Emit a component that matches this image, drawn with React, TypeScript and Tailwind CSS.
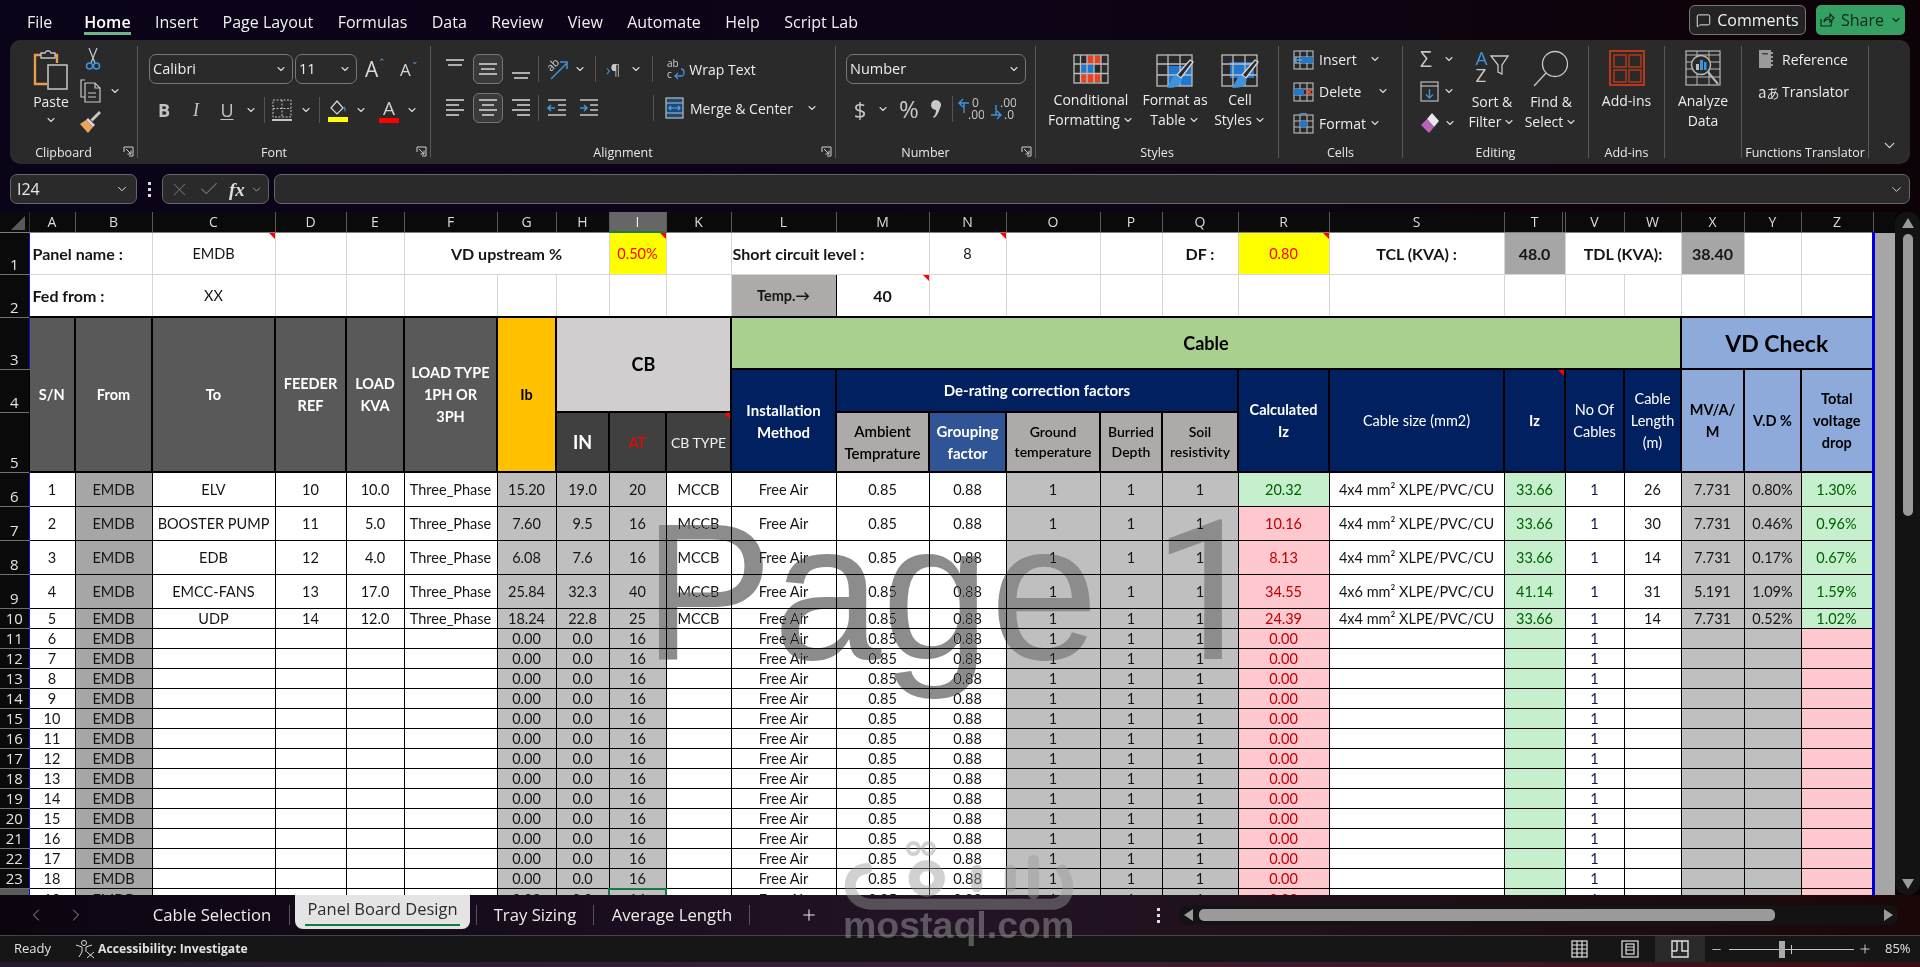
import React from 'react';
import { ChevronDown, ChevronLeft, ChevronRight, MessageSquare, Plus, Minus, X, Check } from 'lucide-react';

const Chev = ({ className = '' }: { className?: string }) => (
  <ChevronDown size={12} strokeWidth={2.2} className={`text-[#d8d8d8] shrink-0 ${className}`} />
);

const Launcher = () => (
  <svg width="11" height="11" viewBox="0 0 11 11" className="absolute right-[3px] bottom-[1px]" fill="none" stroke="#cfcfcf" strokeWidth="1">
    <path d="M1 6V1h9v9H6" />
    <path d="M1 1l0 0M3 3l5 5M8 4.5V8H4.5" />
  </svg>
);

const Lines = ({ ys }: { ys: [number, number, number][] }) => (
  <svg width="20" height="22" viewBox="0 0 20 22" fill="none" stroke="#d0d0d0" strokeWidth="1.6">
    {ys.map(([y, a, b], i) => <path key={i} d={`M${a} ${y}H${b}`} />)}
  </svg>
);

const Group = ({ w, label, launcher, children }: { w: string; label?: string; launcher?: boolean; children: React.ReactNode }) => (
  <div className={`relative flex flex-col h-full border-r border-[#585858] shrink-0 ${w}`}>
    <div className="flex-1 min-h-0">{children}</div>
    {label && <div className={`h-[12px] leading-[14px] text-center text-[12.5px] text-[#e8e8e8] whitespace-nowrap ${launcher ? 'pr-[20px]' : ''}`}>{label}</div>}
    {launcher && <Launcher />}
  </div>
);

const Select = ({ w, text, textClass = '' }: { w: string; text: string; textClass?: string }) => (
  <div className={`flex items-center justify-between h-[30px] px-[3px] pr-[5px] rounded-[7px] border border-[#777] text-[14.5px] ${w} ${textClass}`}>
    <span>{text}</span>
    <Chev />
  </div>
);

const CFIcon = () => (
  <svg width="36" height="30" viewBox="0 0 36 30" fill="none" stroke="#bdbdbd" strokeWidth="1.3">
    <rect x="14" y="2" width="14" height="8" fill="#e8431f" stroke="none" />
    <rect x="7" y="11" width="14" height="8" fill="#1e78cf" stroke="none" />
    <rect x="7" y="20" width="21" height="8" fill="#e8431f" stroke="none" />
    <rect x="1" y="1" width="34" height="28" />
    <path d="M1 10h34M1 19.500h34M7.500 1v28M14 1v28M21 1v28M28 1v28" />
  </svg>
);

const TableBrush = ({ variant }: { variant: 'table' | 'cell' }) => (
  <svg width="38" height="36" viewBox="0 0 38 36" fill="none" stroke="#bdbdbd" strokeWidth="1.3">
    {variant === 'table' ? <rect x="12" y="12" width="24" height="20" fill="#1e78cf" stroke="none" /> : <rect x="9" y="8" width="24" height="16" fill="#1e78cf" stroke="none" />}
    <rect x="1" y="1" width="35" height="31" />
    <path d="M1 10h35M1 21h35M12 1v31M24 1v31" />
    <path d="M37 8L25 24l-4-3L34 6z" fill="#2b2b2b" stroke="#d8d8d8" />
    <path d="M20 22c-4 1-4 6-8 11 7 1 13-2 13-8z" fill="#3f93dd" stroke="#3f93dd" />
  </svg>
);

const MiniGrid = ({ kind }: { kind: 'insert' | 'delete' | 'format' }) => (
  <svg width="21" height="21" viewBox="0 0 21 21" fill="none" stroke="#bdbdbd" strokeWidth="1.1">
    <rect x="1" y="2" width="19" height="18" />
    <path d="M1 8h19M1 14h19M7 2v18M14 2v18" />
    {kind === 'insert' && <><rect x="7" y="8" width="13" height="6" fill="#1e78cf" stroke="none" /><path d="M9 11H1M4 8l-3 3 3 3" stroke="#58a6ea" strokeWidth="1.5" /></>}
    {kind === 'delete' && <><rect x="1" y="8" width="10" height="6" fill="#1e78cf" stroke="none" /><path d="M13 8l6 6M19 8l-6 6" stroke="#e8563a" strokeWidth="1.6" /></>}
    {kind === 'format' && <><rect x="7" y="8" width="7" height="6" fill="#1e78cf" stroke="none" /><path d="M7 0h7" stroke="#58a6ea" strokeWidth="1.6" /></>}
  </svg>
);

const TopTabs = () => (
  <div className="flex items-center h-[40px] shrink-0 pl-[27px] pr-[15px] text-[16px] text-[#f0f0f0]">
    <span className="mr-[32px] mt-[4px]">File</span>
    <div className="flex gap-[24.4px] mt-[4px]">
      <span className="relative font-semibold text-white">
        Home
        <span className="absolute left-0 right-0 top-[22px] h-[3px] bg-[#6fb58a]" />
      </span>
      <span>Insert</span>
      <span>Page Layout</span>
      <span>Formulas</span>
      <span>Data</span>
      <span>Review</span>
      <span>View</span>
      <span>Automate</span>
      <span>Help</span>
      <span>Script Lab</span>
    </div>
    <div className="ml-auto flex items-center gap-[10px]">
      <div className="flex items-center gap-[6px] w-[117px] h-[30px] justify-center rounded-[6px] border border-[#777] bg-[#232323]">
        <MessageSquare size={15} strokeWidth={1.5} />
        <span>Comments</span>
      </div>
      <div className="flex items-center gap-[6px] w-[89px] h-[30px] justify-center rounded-[5px] bg-[#34a162] text-[#12291b]">
        <svg width="16" height="16" viewBox="0 0 16 16" fill="none" stroke="#12291b" strokeWidth="1.2">
          <path d="M2 7v7h10l1-5M5 10c0-4 2-5 6-5V2l4 4-4 4V7c-3 0-5 1-6 3z" />
        </svg>
        <span>Share</span>
        <Chev className="!text-[#12291b]" />
      </div>
    </div>
  </div>
);

const DecIcon = ({ inc }: { inc: boolean }) => (
  <svg width="26" height="26" viewBox="0 0 26 26" fill="none">
    <text x={inc ? 14 : 10} y="11" fontSize="12" fill="#c8c8c8">{inc ? '0' : '.00'}</text>
    <text x={inc ? 10 : 14} y="23" fontSize="12" fill="#c8c8c8">{inc ? '.00' : '.0'}</text>
    {inc
      ? <path d="M11 7H1M5 3L1 7l4 4M6 7v10" stroke="#3f93dd" strokeWidth="1.4" />
      : <path d="M1 19h10M7 15l4 4-4 4M6 9v10" stroke="#3f93dd" strokeWidth="1.4" />}
  </svg>
);

const Ribbon = () => (
  <div className="flex mx-[10px] h-[124px] shrink-0 py-[6px] rounded-[10px] bg-[#2a2a2a] text-[14px] text-[#ececec]">
    <Group w="w-[128px]" label="Clipboard" launcher>
      <div className="flex pt-[4px]">
        <div className="flex flex-col items-center ml-[17px] w-[48px]">
          <svg width="36" height="40" viewBox="0 0 36 40" fill="none">
            <path d="M12 5H2v29h12" stroke="#e89c4c" strokeWidth="2.4" />
            <path d="M21 5h3v8" stroke="#e89c4c" strokeWidth="2.4" />
            <path d="M8 8V3h4c1-3 5-3 6 0h4v5z" fill="#2a2a2a" stroke="#c4c4c4" strokeWidth="1.3" />
            <rect x="15" y="15" width="19" height="24" fill="#2a2a2a" stroke="#c8c8c8" strokeWidth="1.5" />
          </svg>
          <span className="leading-[20px] mt-[2px]">Paste</span>
          <Chev className="mt-[2px]" />
        </div>
        <div className="flex flex-col ml-[3px] -mt-[6px]">
          <div className="h-[30px] flex items-center pl-[7px]">
            <svg width="16" height="24" viewBox="0 0 16 24" fill="none" stroke="#c8c8c8" strokeWidth="1.2">
              <path d="M4 1l6 15M12 1L6 16" />
              <circle cx="4.500" cy="19" r="3" stroke="#3f93dd" strokeWidth="1.5" />
              <circle cx="11.500" cy="19" r="3" stroke="#3f93dd" strokeWidth="1.5" />
            </svg>
          </div>
          <div className="h-[33px] flex items-center">
            <svg width="22" height="24" viewBox="0 0 22 24" fill="none" stroke="#c8c8c8" strokeWidth="1.2" className="ml-[1px]">
              <path d="M6 1H2v17h4" />
              <path d="M6 4h10l5 5v14H6zM16 4v5h5M9 14h8M9 18h8" />
            </svg>
            <Chev className="ml-[8px]" />
          </div>
          <div className="h-[30px] flex items-center pl-[1px]">
            <svg width="22" height="24" viewBox="0 0 22 24" fill="none">
              <path d="M12 10l8-8 1 1-8 8" stroke="#c8c8c8" strokeWidth="1.5" />
              <path d="M9 8l7 7-2 2-7-7z" fill="#d8d8d8" />
              <path d="M7 10l7 7-5 6-8-9z" fill="#e8a65c" />
            </svg>
          </div>
        </div>
      </div>
    </Group>

    <Group w="w-[293px]" label="Font" launcher>
      <div className="flex items-center pt-[8px] ml-[11px]">
        <Select w="w-[144px]" text="Calibri" />
        <Select w="w-[62px] ml-[2px]" text="11" />
        <div className="flex items-start ml-[8px] w-[30px]">
          <span className="text-[21px] leading-[26px] text-[#d8d8d8]">A</span>
          <span className="text-[9px] leading-[12px] text-[#58a6ea]">⌃</span>
        </div>
        <div className="flex items-start ml-[5px]">
          <span className="text-[17px] leading-[26px] text-[#d8d8d8] mt-[2px]">A</span>
          <span className="text-[9px] leading-[12px] text-[#58a6ea]">⌄</span>
        </div>
      </div>
      <div className="flex items-center mt-[12px] ml-[10px] h-[28px] text-[#c4c4c4] text-[18px]">
        <span className="w-[32px] text-center font-bold">B</span>
        <span className="w-[32px] text-center italic font-['Liberation_Serif',serif]">I</span>
        <span className="w-[30px] text-center underline underline-offset-2">U</span>
        <Chev className="ml-[3px]" />
        <span className="w-px h-[26px] bg-[#555] ml-[7px]" />
        <svg width="20" height="22" viewBox="0 0 20 22" fill="none" stroke="#c4c4c4" strokeWidth="1" strokeDasharray="2 1.500" className="ml-[7px]">
          <rect x="1" y="1" width="18" height="17" />
          <path d="M10 1v17M1 9.500h18" />
          <path d="M0 21h20" strokeDasharray="0" strokeWidth="2" />
        </svg>
        <Chev className="ml-[8px]" />
        <span className="w-px h-[26px] bg-[#555] ml-[7px]" />
        <svg width="20" height="24" viewBox="0 0 20 24" className="ml-[8px]" fill="none">
          <path d="M3 10l6-7 6 7-6 6z" stroke="#d8d8d8" strokeWidth="1.2" />
          <path d="M16 8c2 2 2 5 1 6-1-2-1-4-1-6z" fill="#3f93dd" />
          <rect x="0" y="19" width="20" height="5" fill="#ffff00" />
        </svg>
        <Chev className="ml-[7px]" />
        <div className="flex flex-col items-center w-[20px] ml-[12px]">
          <span className="text-[19px] leading-[20px] text-[#d0d0d0]">A</span>
          <span className="w-[20px] h-[5px] bg-[#ff0000]" />
        </div>
        <Chev className="ml-[7px]" />
      </div>
    </Group>

    <Group w="w-[405px]" label="Alignment" launcher>
      <div className="flex items-center pt-[8px] ml-[14px] h-[38px]">
        <div className="w-[20px] -mt-[8px]"><Lines ys={[[6, 1, 19], [11, 3, 17]]} /></div>
        <div className="flex items-center justify-center ml-[8px] w-[30px] h-[30px] rounded-[6px] border border-[#777] bg-[#3a3a3a]"><Lines ys={[[6, 1, 19], [11, 3, 17], [16, 1, 19]]} /></div>
        <div className="w-[20px] ml-[8px] mt-[8px]"><Lines ys={[[11, 1, 19], [16, 3, 17]]} /></div>
        <span className="w-px h-[26px] bg-[#555] ml-[7px]" />
        <svg width="22" height="24" viewBox="0 0 22 24" className="ml-[8px]" fill="none">
          <text x="1" y="12" fontSize="11" fill="#d0d0d0" transform="rotate(-45 6 10)">ab</text>
          <path d="M4 22L20 6M13 5h7v7" stroke="#3f93dd" strokeWidth="1.5" />
        </svg>
        <Chev className="ml-[5px]" />
        <span className="w-px h-[26px] bg-[#555] ml-[9px]" />
        <span className="ml-[10px] text-[15px]"><span className="text-[#3f93dd]">›</span><span className="text-[#c8c8c8]">¶</span></span>
        <Chev className="ml-[10px]" />
        <span className="w-px h-[26px] bg-[#555] ml-[10px]" />
        <div className="flex items-center ml-[14px]">
          <svg width="20" height="24" viewBox="0 0 20 24" fill="none">
            <text x="0" y="10" fontSize="10" fill="#d0d0d0">ab</text>
            <text x="0" y="21" fontSize="10" fill="#d0d0d0">c</text>
            <path d="M14 12c4 0 4 7 0 7H8M11 16l-3 3 3 3" stroke="#3f93dd" strokeWidth="1.3" />
          </svg>
          <span className="ml-[2px]">Wrap Text</span>
        </div>
      </div>
      <div className="flex items-center mt-[9px] ml-[14px] h-[30px]">
        <Lines ys={[[3, 1, 19], [8, 1, 14], [13, 1, 19], [18, 1, 14]]} />
        <div className="flex items-center justify-center ml-[8px] w-[30px] h-[30px] rounded-[6px] border border-[#777] bg-[#3a3a3a]"><Lines ys={[[3, 1, 19], [8, 4, 16], [13, 1, 19], [18, 4, 16]]} /></div>
        <div className="ml-[8px]"><Lines ys={[[3, 1, 19], [8, 6, 19], [13, 1, 19], [18, 6, 19]]} /></div>
        <span className="w-px h-[26px] bg-[#555] ml-[7px]" />
        <svg width="20" height="22" viewBox="0 0 20 22" fill="none" stroke="#c8c8c8" strokeWidth="1.6" className="ml-[8px]">
          <path d="M1 3h18M11 8h8M11 13h8M1 18h18" />
          <path d="M8 11H1M4 8l-3 3 3 3" stroke="#3f93dd" />
        </svg>
        <svg width="20" height="22" viewBox="0 0 20 22" fill="none" stroke="#c8c8c8" strokeWidth="1.6" className="ml-[12px]">
          <path d="M1 3h18M11 8h8M11 13h8M1 18h18" />
          <path d="M1 11h7M5 8l3 3-3 3" stroke="#3f93dd" />
        </svg>
        <span className="w-px h-[26px] bg-[#555] ml-[54px]" />
        <div className="flex items-center ml-[11px]">
          <svg width="19" height="22" viewBox="0 0 19 22" fill="none" stroke="#bdbdbd" strokeWidth="1.2">
            <rect x="1" y="1" width="17" height="20" fill="#1c4a78" />
            <path d="M1 6h17M1 16h17" />
            <path d="M4 11h11M6 9l-2 2 2 2M13 9l2 2-2 2" stroke="#58a6ea" />
          </svg>
          <span className="ml-[6px]">Merge &amp; Center</span>
          <Chev className="ml-[13px]" />
        </div>
      </div>
    </Group>

    <Group w="w-[200px]" label="Number" launcher>
      <div className="pt-[8px] ml-[10px]"><Select w="w-[180px]" text="Number" /></div>
      <div className="flex items-center mt-[10px] ml-[17px] h-[30px] text-[#c8c8c8]">
        <span className="text-[22px] w-[14px] text-center">$</span>
        <Chev className="ml-[10px]" />
        <span className="text-[24px] ml-[8px] w-[24px] text-center">%</span>
        <svg width="10" height="18" viewBox="0 0 10 18" className="ml-[10px]" fill="#c8c8c8">
          <path d="M5 0a5 5 0 0 1 4 8c-1 4-3 8-6 10l-1-1c2-2 3-4 3-7A5 5 0 0 1 5 0z" />
        </svg>
        <span className="w-px h-[26px] bg-[#555] ml-[11px]" />
        <div className="ml-[5px]"><DecIcon inc /></div>
        <div className="ml-[6px]"><DecIcon inc={false} /></div>
      </div>
    </Group>

    <Group w="w-[243px]" label="Styles">
      <div className="flex pt-[8px] ml-[4px] leading-[20px] text-center">
        <div className="w-[102px] flex flex-col items-center">
          <CFIcon />
          <span className="mt-[6px]">Conditional</span>
          <span className="flex items-center gap-[2px]">Formatting<Chev /></span>
        </div>
        <div className="w-[66px] flex flex-col items-center">
          <div className="-mb-[6px]"><TableBrush variant="table" /></div>
          <span className="mt-[6px]">Format as</span>
          <span className="flex items-center gap-[2px]">Table<Chev /></span>
        </div>
        <div className="w-[64px] flex flex-col items-center">
          <div className="-mb-[6px]"><TableBrush variant="cell" /></div>
          <span className="mt-[6px]">Cell</span>
          <span className="flex items-center gap-[2px]">Styles<Chev /></span>
        </div>
      </div>
    </Group>

    <Group w="w-[124px]" label="Cells">
      <div className="flex flex-col pl-[14px] -mt-[3px]">
        <div className="flex items-center h-[32px]"><MiniGrid kind="insert" /><span className="ml-[5px] w-[50px]">Insert</span><Chev /></div>
        <div className="flex items-center h-[32px]"><MiniGrid kind="delete" /><span className="ml-[5px] w-[58px]">Delete</span><Chev /></div>
        <div className="flex items-center h-[32px]"><MiniGrid kind="format" /><span className="ml-[5px] w-[50px]">Format</span><Chev /></div>
      </div>
    </Group>

    <Group w="w-[186px]" label="Editing">
      <div className="flex">
        <div className="flex flex-col pl-[17px] -mt-[3px] w-[60px]">
          <div className="flex items-center h-[32px] gap-[5px]">
            <span className="text-[21px] w-[18px] leading-none text-[#c8c8c8]">Σ</span><Chev />
          </div>
          <div className="flex items-center h-[32px] gap-[4px]">
            <svg width="19" height="21" viewBox="0 0 19 21" fill="none" stroke="#c8c8c8" strokeWidth="1.1">
              <rect x="1" y="1" width="17" height="19" />
              <path d="M1 5h17" />
              <path d="M9.500 8v9M6 13.500l3.500 3.500 3.500-3.500" stroke="#3f93dd" strokeWidth="1.4" />
            </svg>
            <Chev />
          </div>
          <div className="flex items-center h-[32px] gap-[4px]">
            <svg width="20" height="22" viewBox="0 0 20 22">
              <path d="M12 1l7 8-5 6-7-8z" fill="#e8e8e8" />
              <path d="M7 7l7 8-5 6-8-8z" fill="#b863b8" />
            </svg>
            <Chev />
          </div>
        </div>
        <div className="flex flex-col items-center w-[64px] ml-[-3px] pt-[4px] leading-[20px]">
          <div className="flex items-start h-[36px]">
            <div className="flex flex-col text-[19px] leading-[17px]"><span className="text-[#3f93dd]">A</span><span className="text-[#c8c8c8]">Z</span></div>
            <svg width="19" height="22" viewBox="0 0 19 22" className="mt-[5px] ml-[2px]" fill="none" stroke="#c8c8c8" strokeWidth="1.3">
              <path d="M1 1h17l-6 9v9l-4-2v-7z" />
            </svg>
          </div>
          <span className="mt-[6px]">Sort &amp;</span>
          <span className="flex items-center gap-[2px]">Filter<Chev /></span>
        </div>
        <div className="flex flex-col items-center w-[60px] -ml-[3px] pt-[4px] leading-[20px]">
          <svg width="38" height="38" viewBox="0 0 38 38" fill="none" stroke="#c8c8c8" strokeWidth="1.3" className="-mb-[2px]">
            <circle cx="23" cy="14" r="12.500" />
            <path d="M14 23L2 36" />
          </svg>
          <span className="mt-[6px]">Find &amp;</span>
          <span className="flex items-center gap-[2px]">Select<Chev /></span>
        </div>
      </div>
    </Group>

    <Group w="w-[76px]" label="Add-ins">
      <div className="flex flex-col items-center pt-[4px] leading-[20px]">
        <svg width="36" height="36" viewBox="0 0 36 36" fill="none" stroke="#b5391a" strokeWidth="2">
          <rect x="1" y="1" width="34" height="34" />
          <rect x="5" y="5" width="12" height="12" strokeWidth="1.5" />
          <rect x="20" y="5" width="12" height="12" strokeWidth="1.5" />
          <rect x="5" y="20" width="12" height="12" strokeWidth="1.5" />
          <rect x="20" y="20" width="12" height="12" strokeWidth="1.5" />
        </svg>
        <span className="mt-[5px]">Add-ins</span>
      </div>
    </Group>

    <Group w="w-[77px]">
      <div className="flex flex-col items-center pt-[4px] leading-[20px]">
        <svg width="36" height="36" viewBox="0 0 36 36" fill="none" stroke="#b8b8b8" strokeWidth="1.2">
          <rect x="1" y="1" width="34" height="34" />
          <path d="M1 5h34M1 12h34M1 19h34M1 27h34M12 1v34M24 1v34" strokeWidth="1" />
          <circle cx="16" cy="15" r="9.500" fill="#2a2a2a" strokeWidth="1.5" />
          <rect x="11" y="14" width="3" height="6" fill="#bbb" stroke="none" />
          <rect x="15" y="10" width="3" height="10" fill="#3f93dd" stroke="none" />
          <rect x="19" y="12" width="2.500" height="8" fill="#3f93dd" stroke="none" />
          <path d="M23 22l10 12" strokeWidth="2" />
        </svg>
        <span className="mt-[5px]">Analyze</span>
        <span>Data</span>
      </div>
    </Group>

    <Group w="w-[127px]" label="Functions Translator">
      <div className="flex flex-col pl-[17px] -mt-[3px]">
        <div className="flex items-center h-[32px]">
          <svg width="15" height="20" viewBox="0 0 15 20" fill="#9a9a9a"><rect x="0" y="1" width="12" height="18" /><path d="M12 3h2v2h-2zM12 7h2v2h-2zM12 11h2v2h-2zM12 15h2v2h-2z" /><rect x="3" y="4" width="6" height="1.500" fill="#444" /></svg>
          <span className="ml-[8px]">Reference</span>
        </div>
        <div className="flex items-center h-[32px]">
          <span className="text-[15px] leading-none font-['Noto_Sans_CJK_JP',sans-serif] text-[#ddd] -ml-[1px] w-[24px]">a<span className="text-[13px]">あ</span></span>
          <span>Translator</span>
        </div>
      </div>
    </Group>

    <div className="flex-1 flex items-end justify-center pb-[4px]">
      <ChevronDown size={17} strokeWidth={1.6} className="text-[#e0e0e0]" />
    </div>
  </div>
);

const FormulaBar = () => (
  <div className="flex items-center mx-[10px] mt-[10px] h-[30px] shrink-0 text-[#e8e8e8]">
    <div className="flex items-center justify-between w-[127px] h-full rounded-[7px] border border-[#666] bg-[#2a2a2a] pl-[6px] pr-[7px] text-[16px]">
      <span>I24</span>
      <ChevronDown size={14} strokeWidth={1.6} />
    </div>
    <div className="flex flex-col gap-[3px] w-[25px] items-center">
      <span className="w-[3px] h-[3px] bg-[#ddd]" />
      <span className="w-[3px] h-[3px] bg-[#ddd]" />
      <span className="w-[3px] h-[3px] bg-[#ddd]" />
    </div>
    <div className="flex items-center w-[107px] h-full rounded-[7px] border border-[#666] bg-[#2a2a2a] pl-[6px]">
      <X size={21} strokeWidth={1.2} className="text-[#707070]" />
      <Check size={22} strokeWidth={1.2} className="text-[#707070] ml-[8px]" />
      <span className="ml-[9px] font-['Liberation_Serif',serif] italic font-bold text-[19px] leading-none text-[#dcdcdc]">fx</span>
      <ChevronDown size={13} strokeWidth={1.6} className="ml-[5px] text-[#aaa]" />
    </div>
    <div className="flex items-center justify-end flex-1 ml-[5px] h-full rounded-[7px] border border-[#666] bg-[#2a2a2a] pr-[5px]">
      <ChevronDown size={15} strokeWidth={1.6} className="text-[#ccc]" />
    </div>
  </div>
);

const Tri = () => <span className="absolute top-0 right-0 w-0 h-0 border-l-[6px] border-l-transparent border-t-[6px] border-t-[#ff0000]" />;

const letters = ['A', 'B', 'C', 'D', 'E', 'F', 'G', 'H', 'I', 'K', 'L', 'M', 'N', 'O', 'P', 'Q', 'R', 'S', 'T', 'V', 'W', 'X', 'Y', 'Z'];

const base = 'p-0 text-center align-middle whitespace-nowrap overflow-hidden';
const thin = 'border border-[#d6d6d6] bg-white';
const hd = 'border-2 border-black';
const dat = 'border border-black';
const RN = ({ n, sel }: { n: number; sel?: boolean }) => (
  <td className={`p-0 text-center align-bottom leading-[19px] text-[15px] text-[#e4e4e4] border-b border-b-[#707070] border-r border-r-[#1010e0] font-['Open_Sans',sans-serif] ${sel ? 'bg-[#5a5a5a]' : 'bg-[#0a0a0a]'}`}>{n}</td>
);
const Side = () => <td className="p-0 bg-[#a6a6a6] border-l-[3px] border-l-[#0000e0]" />;

type R = { n: number; to: string; ref: string; kva: string; type: string; ib: string; inn: string; at: string; cb: string; rz: string; ok: boolean; size: string; iz: string; len: string; mv: string; vd: string; tot: string };
const main: R[] = [
  { n: 1, to: 'ELV', ref: '10', kva: '10.0', type: 'Three_Phase', ib: '15.20', inn: '19.0', at: '20', cb: 'MCCB', rz: '20.32', ok: true, size: '4x4 mm² XLPE/PVC/CU', iz: '33.66', len: '26', mv: '7.731', vd: '0.80%', tot: '1.30%' },
  { n: 2, to: 'BOOSTER PUMP', ref: '11', kva: '5.0', type: 'Three_Phase', ib: '7.60', inn: '9.5', at: '16', cb: 'MCCB', rz: '10.16', ok: false, size: '4x4 mm² XLPE/PVC/CU', iz: '33.66', len: '30', mv: '7.731', vd: '0.46%', tot: '0.96%' },
  { n: 3, to: 'EDB', ref: '12', kva: '4.0', type: 'Three_Phase', ib: '6.08', inn: '7.6', at: '16', cb: 'MCCB', rz: '8.13', ok: false, size: '4x4 mm² XLPE/PVC/CU', iz: '33.66', len: '14', mv: '7.731', vd: '0.17%', tot: '0.67%' },
  { n: 4, to: 'EMCC-FANS', ref: '13', kva: '17.0', type: 'Three_Phase', ib: '25.84', inn: '32.3', at: '40', cb: 'MCCB', rz: '34.55', ok: false, size: '4x6 mm² XLPE/PVC/CU', iz: '41.14', len: '31', mv: '5.191', vd: '1.09%', tot: '1.59%' },
  { n: 5, to: 'UDP', ref: '14', kva: '12.0', type: 'Three_Phase', ib: '18.24', inn: '22.8', at: '25', cb: 'MCCB', rz: '24.39', ok: false, size: '4x4 mm² XLPE/PVC/CU', iz: '33.66', len: '14', mv: '7.731', vd: '0.52%', tot: '1.02%' },
];
const filler: R[] = Array.from({ length: 14 }, (_, i) => ({ n: i + 6, to: '', ref: '', kva: '', type: '', ib: '0.00', inn: '0.0', at: '16', cb: '', rz: '0.00', ok: false, size: '', iz: '', len: '', mv: '', vd: '', tot: '' }));

const gray = 'bg-[#bfbfbf]';
const greenC = 'bg-[#c6efce] text-[#006100]';
const pinkC = 'bg-[#ffc7ce] text-[#c00000]';

const DataRow = ({ r, rowNum, h }: { r: R; rowNum: number; h: string }) => (
  <tr className={h}>
    <RN n={rowNum} sel={rowNum === 24} />
    <td className={`${base} ${dat} bg-white`}>{r.n}</td>
    <td className={`${base} ${dat} bg-[#a6a6a6]`}>EMDB</td>
    <td className={`${base} ${dat} bg-white`}>{r.to}</td>
    <td className={`${base} ${dat} bg-white`}>{r.ref}</td>
    <td className={`${base} ${dat} bg-white`}>{r.kva}</td>
    <td className={`${base} ${dat} bg-white`}>{r.type}</td>
    <td className={`${base} ${dat} ${gray}`}>{r.ib}</td>
    <td className={`${base} ${dat} ${gray}`}>{r.inn}</td>
    <td className={`${base} ${rowNum === 24 ? 'border-2 border-[#107c41]' : dat} ${gray}`}>{r.at}</td>
    <td className={`${base} ${dat} bg-white`}>{r.cb}</td>
    <td className={`${base} ${dat} bg-white`}>Free Air</td>
    <td className={`${base} ${dat} bg-white`}>0.85</td>
    <td className={`${base} ${dat} bg-white`}>0.88</td>
    <td className={`${base} ${dat} ${gray}`}>1</td>
    <td className={`${base} ${dat} ${gray}`}>1</td>
    <td className={`${base} ${dat} ${gray}`}>1</td>
    <td className={`${base} ${dat} ${r.ok ? greenC : pinkC}`}>{r.rz}</td>
    <td className={`${base} ${dat} bg-white`}>{r.size}</td>
    <td className={`${base} ${dat} ${greenC}`}>{r.iz}</td>
    <td className={`${base} ${dat} bg-white text-[#0a1a4a]`}>1</td>
    <td className={`${base} ${dat} bg-white`}>{r.len}</td>
    <td className={`${base} ${dat} ${gray}`}>{r.mv}</td>
    <td className={`${base} ${dat} ${gray}`}>{r.vd}</td>
    <td className={`${base} ${dat} ${r.tot ? greenC : 'bg-[#ffc7ce]'}`}>{r.tot}</td>
    <Side />
  </tr>
);

const Sheet = () => (
  <div className="relative flex h-[683px] mt-[8px] shrink-0">
    <div className="relative w-[1895px] h-full overflow-hidden bg-[#a6a6a6]">
      <table className="table-fixed w-[1895px] border-collapse font-['Lato',sans-serif] text-[14.5px] leading-[19px] text-[#151515]">
        <colgroup>
          <col className="w-[29px]" /><col className="w-[46px]" /><col className="w-[77px]" /><col className="w-[123px]" /><col className="w-[71px]" /><col className="w-[58px]" /><col className="w-[93px]" /><col className="w-[59px]" /><col className="w-[53px]" /><col className="w-[57px]" /><col className="w-[65px]" /><col className="w-[105px]" /><col className="w-[93px]" /><col className="w-[77px]" /><col className="w-[94px]" /><col className="w-[62px]" /><col className="w-[76px]" /><col className="w-[91px]" /><col className="w-[175px]" /><col className="w-[61px]" /><col className="w-[59px]" /><col className="w-[57px]" /><col className="w-[63px]" /><col className="w-[57px]" /><col className="w-[72px]" /><col className="w-[22px]" />
        </colgroup>
        <tbody>
          <tr className="h-[20px]">
            <td className="p-0 bg-[#0a0a0a] border-b border-b-[#808080] border-r border-r-[#333]">
              <svg width="14" height="14" viewBox="0 0 14 14" className="ml-[11px] mt-[2px]"><path d="M14 0v14H0z" fill="#5a5a5a" /></svg>
            </td>
            {letters.map((l) => (
              <td key={l} className={`relative p-0 text-center align-middle text-[14px] font-['Open_Sans',sans-serif] border-r border-r-[#5a5a5a] ${l === 'I' ? 'bg-[#666666] text-[#f0f0f0] border-b-2 border-b-[#1d7d46]' : 'bg-[#0a0a0a] text-[#dcdcdc] border-b border-b-[#808080]'}`}>
                {l}
                {l === 'T' && <span className="absolute right-[2px] top-0 bottom-0 w-px bg-[#5a5a5a]" />}
              </td>
            ))}
            <td className="p-0 bg-[#0a0a0a] border-b border-b-[#0a0a0a]" />
          </tr>

          <tr className="h-[42px]">
            <RN n={1} />
            <td colSpan={2} className={`${thin} p-0 pl-[3px] text-left align-middle font-bold text-[16px]`}>Panel name :</td>
            <td className={`${base} ${thin} relative`}>EMDB<Tri /></td>
            <td className={thin} /><td className={thin} />
            <td colSpan={3} className={`${base} ${thin} font-bold text-[16px]`}>VD upstream %</td>
            <td className={`${base} relative bg-[#ffff00] text-[#ff0000] border border-[#d6d6d6]`}>0.50%<Tri /></td>
            <td className={thin} />
            <td colSpan={2} className={`${thin} p-0 pl-[1px] text-left align-middle font-bold text-[16px]`}>Short circuit level :</td>
            <td className={`${base} ${thin} relative`}>8<Tri /></td>
            <td className={thin} /><td className={thin} />
            <td className={`${base} ${thin} font-bold text-[16px]`}>DF :</td>
            <td className={`${base} relative bg-[#ffff00] text-[#ff0000] border border-[#d6d6d6]`}>0.80<Tri /></td>
            <td className={`${base} ${thin} font-bold text-[16px]`}>TCL (KVA) :</td>
            <td className={`${base} bg-[#a6a6a6] font-bold text-[16px]`}>48.0</td>
            <td colSpan={2} className={`${base} ${thin} font-bold text-[16px]`}>TDL (KVA):</td>
            <td className={`${base} bg-[#a6a6a6] font-bold text-[16px]`}>38.40</td>
            <td className={thin} /><td className={thin} />
            <Side />
          </tr>

          <tr className="h-[43px]">
            <RN n={2} />
            <td colSpan={2} className={`${thin} p-0 pl-[3px] text-left align-middle font-bold text-[16px]`}>Fed from :</td>
            <td className={`${base} ${thin}`}>XX</td>
            <td className={thin} /><td className={thin} /><td className={thin} /><td className={thin} /><td className={thin} /><td className={thin} /><td className={thin} />
            <td className={`${base} border border-black bg-[#aeaaaa] font-bold`}>Temp.→</td>
            <td className={`${base} relative border-y border-r border-y-[#d6d6d6] border-r-[#d6d6d6] bg-white font-bold text-[16px]`}>40<Tri /></td>
            <td className={thin} /><td className={thin} /><td className={thin} /><td className={thin} /><td className={thin} /><td className={thin} /><td className={thin} /><td className={thin} /><td className={thin} /><td className={thin} /><td className={thin} /><td className={thin} />
            <Side />
          </tr>

          <tr className="h-[52px]">
            <RN n={3} />
            <td rowSpan={3} className={`${base} border-y-2 border-r-2 border-l border-black bg-[#595959] text-white font-bold leading-[22px]`}>S/N</td>
            <td rowSpan={3} className={`${base} ${hd} bg-[#595959] text-white font-bold leading-[22px]`}>From</td>
            <td rowSpan={3} className={`${base} ${hd} bg-[#595959] text-white font-bold leading-[22px]`}>To</td>
            <td rowSpan={3} className={`${base} ${hd} bg-[#595959] text-white font-bold leading-[22px]`}>FEEDER<br />REF</td>
            <td rowSpan={3} className={`${base} ${hd} bg-[#595959] text-white font-bold leading-[22px]`}>LOAD<br />KVA</td>
            <td rowSpan={3} className={`${base} ${hd} bg-[#595959] text-white font-bold leading-[22px]`}>LOAD TYPE<br />1PH OR<br />3PH</td>
            <td rowSpan={3} className={`${base} ${hd} bg-[#ffc000] text-black font-bold`}>Ib</td>
            <td rowSpan={2} colSpan={3} className={`${base} ${hd} bg-[#d0cece] text-black font-bold text-[18px]`}>CB</td>
            <td colSpan={11} className={`${base} ${hd} bg-[#a9d08e] text-black font-bold text-[18px]`}>Cable</td>
            <td colSpan={3} className={`${base} ${hd} border-r-0 bg-[#8eaadb] text-black font-bold text-[23px]`}>VD Check</td>
            <Side />
          </tr>

          <tr className="h-[43px]">
            <RN n={4} />
            <td rowSpan={2} className={`${base} ${hd} bg-[#002060] text-white font-bold leading-[22px] text-[15px]`}>Installation<br />Method</td>
            <td colSpan={5} className={`${base} ${hd} bg-[#002060] text-white font-bold text-[15px]`}>De-rating correction factors</td>
            <td rowSpan={2} className={`${base} ${hd} bg-[#002060] text-white font-bold leading-[22px]`}>Calculated<br />Iz</td>
            <td rowSpan={2} className={`${base} ${hd} bg-[#002060] text-white leading-[22px]`}>Cable size (mm2)</td>
            <td rowSpan={2} className={`${base} ${hd} relative bg-[#002060] text-white font-bold`}>Iz<Tri /></td>
            <td rowSpan={2} className={`${base} ${hd} bg-[#002060] text-white leading-[22px]`}>No Of<br />Cables</td>
            <td rowSpan={2} className={`${base} ${hd} bg-[#002060] text-white leading-[22px]`}>Cable<br />Length<br />(m)</td>
            <td rowSpan={2} className={`${base} ${hd} bg-[#8eaadb] text-black font-bold leading-[22px]`}>MV/A/<br />M</td>
            <td rowSpan={2} className={`${base} ${hd} bg-[#8eaadb] text-black font-bold`}>V.D %</td>
            <td rowSpan={2} className={`${base} ${hd} bg-[#8eaadb] text-black font-bold leading-[22px]`}>Total<br />voltage<br />drop</td>
            <Side />
          </tr>

          <tr className="h-[60px]">
            <RN n={5} />
            <td className={`${base} ${hd} bg-[#404040] text-white font-bold text-[18px]`}>IN</td>
            <td className={`${base} ${hd} bg-[#404040] text-[#ff0000]`}>AT</td>
            <td className={`${base} ${hd} relative bg-[#404040] text-[#f0f0f0] text-[14px]`}>CB TYPE<Tri /></td>
            <td className={`${base} ${hd} bg-[#aeaaaa] text-black font-semibold leading-[22px] text-[15px]`}>Ambient<br />Temprature</td>
            <td className={`${base} ${hd} bg-[#2f5597] text-white font-bold leading-[22px] text-[15px]`}>Grouping<br />factor</td>
            <td className={`${base} ${hd} bg-[#aeaaaa] text-black font-semibold leading-[20px] text-[14px]`}>Ground<br />temperature</td>
            <td className={`${base} ${hd} bg-[#aeaaaa] text-black font-semibold leading-[20px] text-[14px]`}>Burried<br />Depth</td>
            <td className={`${base} ${hd} bg-[#aeaaaa] text-black font-semibold leading-[20px] text-[14px]`}>Soil<br />resistivity</td>
            <Side />
          </tr>

          {main.map((r, i) => <DataRow key={r.n} r={r} rowNum={i + 6} h={i < 4 ? 'h-[34px]' : 'h-[20px]'} />)}
          {filler.map((r, i) => <DataRow key={r.n} r={r} rowNum={i + 11} h="h-[20px]" />)}
        </tbody>
      </table>
      <div className="absolute left-[643px] top-[282px] font-['Liberation_Sans',sans-serif] text-[195px] leading-none text-[#8c8c8c] mix-blend-darken whitespace-nowrap pointer-events-none">
        Page <span className="font-['Roboto',sans-serif]">1</span>
      </div>
    </div>
    <div className="flex flex-col items-center w-[25px] h-full py-[6px] rounded-[12px] bg-[#131313]">
      <svg width="12" height="10" viewBox="0 0 12 10"><path d="M6 0l6 10H0z" fill="#9a9a9a" /></svg>
      <div className="w-[10px] h-[282px] mt-[6px] rounded-[5px] bg-[#9a9a9a]" />
      <svg width="12" height="10" viewBox="0 0 12 10" className="mt-auto"><path d="M6 10L0 0h12z" fill="#9a9a9a" /></svg>
    </div>
  </div>
);

const SheetTabs = () => (
  <div className="flex items-center h-[40px] shrink-0 text-[16.7px] text-[#ececec] bg-gradient-to-r from-[#0c0510] via-[#231426] to-[#1a0808]">
    <ChevronLeft size={20} strokeWidth={1.2} className="ml-[26px] text-[#999]" />
    <ChevronRight size={20} strokeWidth={1.2} className="ml-[20px] text-[#999]" />
    <span className="ml-[65px] w-[122px] text-center whitespace-nowrap">Cable Selection</span>
    <span className="ml-[16px] w-px h-[20px] bg-[#555]" />
    <div className="flex flex-col items-center self-start ml-[5px] w-[175px] h-[34px] rounded-b-[8px] bg-[#e4e4e4] text-[#2c2c2c]">
      <span className="leading-[26px] mt-[1px] font-medium text-[16.5px] whitespace-nowrap">Panel Board Design</span>
      <span className="w-[155px] h-[2px] mt-[2px] bg-[#107c41]" />
    </div>
    <span className="ml-[6px] w-px h-[20px] bg-[#555]" />
    <span className="ml-[16px] w-[84px] text-center whitespace-nowrap">Tray Sizing</span>
    <span className="ml-[16px] w-px h-[20px] bg-[#555]" />
    <span className="ml-[17px] w-[122px] text-center whitespace-nowrap">Average Length</span>
    <span className="ml-[16px] w-px h-[20px] bg-[#555]" />
    <Plus size={18} strokeWidth={1.4} className="ml-[50px]" />
    <div className="flex flex-col gap-[3px] ml-[339px]">
      <span className="w-[3px] h-[3px] bg-[#ddd]" />
      <span className="w-[3px] h-[3px] bg-[#ddd]" />
      <span className="w-[3px] h-[3px] bg-[#ddd]" />
    </div>
    <div className="flex items-center ml-[19px] w-[719px] h-[20px] rounded-[8px] bg-[#131313] px-[5px]">
      <svg width="9" height="12" viewBox="0 0 9 12"><path d="M9 0v12L0 6z" fill="#9a9a9a" /></svg>
      <div className="ml-[6px] w-[576px] h-[12px] rounded-[5px] bg-[#9a9a9a]" />
      <svg width="9" height="12" viewBox="0 0 9 12" className="ml-auto"><path d="M0 0v12l9-6z" fill="#9a9a9a" /></svg>
    </div>
  </div>
);

const StatusBar = () => (
  <div className="flex items-center h-[27px] shrink-0 border-t border-[#454545] bg-[#161616] text-[13px] text-[#e0e0e0]">
    <span className="ml-[14px]">Ready</span>
    <svg width="20" height="20" viewBox="0 0 20 20" fill="none" stroke="#d8d8d8" strokeWidth="1" className="ml-[24px]">
      <circle cx="9" cy="4" r="2.500" />
      <path d="M1 6l6 2v5l-3 5M17 6l-6 2v5M12 13l7 6M19 13l-7 6" />
    </svg>
    <span className="ml-[3px] font-bold text-[12.2px]">Accessibility: Investigate</span>
    <div className="ml-auto flex items-center h-full">
      <svg width="17" height="18" viewBox="0 0 17 18" fill="none" stroke="#e0e0e0" strokeWidth="1.2">
        <rect x="1" y="1" width="15" height="16" />
        <path d="M1 5h15M1 9h15M1 13h15M6 1v16M11 1v16" />
      </svg>
      <svg width="18" height="18" viewBox="0 0 18 18" fill="none" stroke="#e0e0e0" strokeWidth="1.2" className="ml-[33px]">
        <rect x="1" y="1" width="16" height="16" />
        <rect x="5" y="4" width="8" height="10" />
        <path d="M5 7h8M5 10h8" />
      </svg>
      <div className="flex items-center justify-center ml-[16px] w-[50px] h-full bg-[#2a2a2a]">
        <svg width="18" height="18" viewBox="0 0 18 18" fill="none" stroke="#e0e0e0" strokeWidth="1.4">
          <path d="M1 1h16v16H1zM1 1v10h5M6 1v10M11 1v10h6" />
        </svg>
      </div>
      <Minus size={13} strokeWidth={1.5} className="ml-[5px]" />
      <div className="relative ml-[6px] w-[125px] h-[1px] bg-[#c8c8c8]">
        <span className="absolute left-[50px] top-[-8px] w-[6px] h-[17px] bg-[#aaa]" />
        <span className="absolute left-[62px] top-[-4px] w-px h-[9px] bg-[#c8c8c8]" />
      </div>
      <Plus size={14} strokeWidth={1.5} className="ml-[4px]" />
      <span className="ml-[13px] w-[35px]">85%</span>
    </div>
  </div>
);

export default function App() {
  return (
    <div className="relative flex flex-col w-[1920px] h-[967px] overflow-hidden bg-gradient-to-r from-[#0b0318] via-[#0e0418] to-[#0d0207] font-['Open_Sans',sans-serif]">
      <TopTabs />
      <Ribbon />
      <FormulaBar />
      <Sheet />
      <SheetTabs />
      <StatusBar />
      <div className="flex-1 bg-gradient-to-r from-[#241a30] via-[#3a1f3a] to-[#3a0f12]" />
      <svg width="247" height="77" viewBox="60 30 740 230" fill="none" stroke="#999999" strokeOpacity="0.45" strokeWidth="33" strokeLinecap="round" className="absolute left-[840px] top-[840px] pointer-events-none">
        <path d="M140 115C75 120 70 215 150 222L700 222C745 215 755 165 725 120" />
        <circle cx="320" cy="145" r="38" />
        <path d="M470 120V170M570 120V170M640 90V190" />
        <circle cx="280" cy="55" r="6" />
        <circle cx="325" cy="55" r="6" />
      </svg>
      <div className="absolute left-[843px] top-[903px] font-['Liberation_Sans',sans-serif] font-bold text-[37.5px] leading-[44px] text-[#999999]/50 pointer-events-none">mostaql.com</div>
    </div>
  );
}
